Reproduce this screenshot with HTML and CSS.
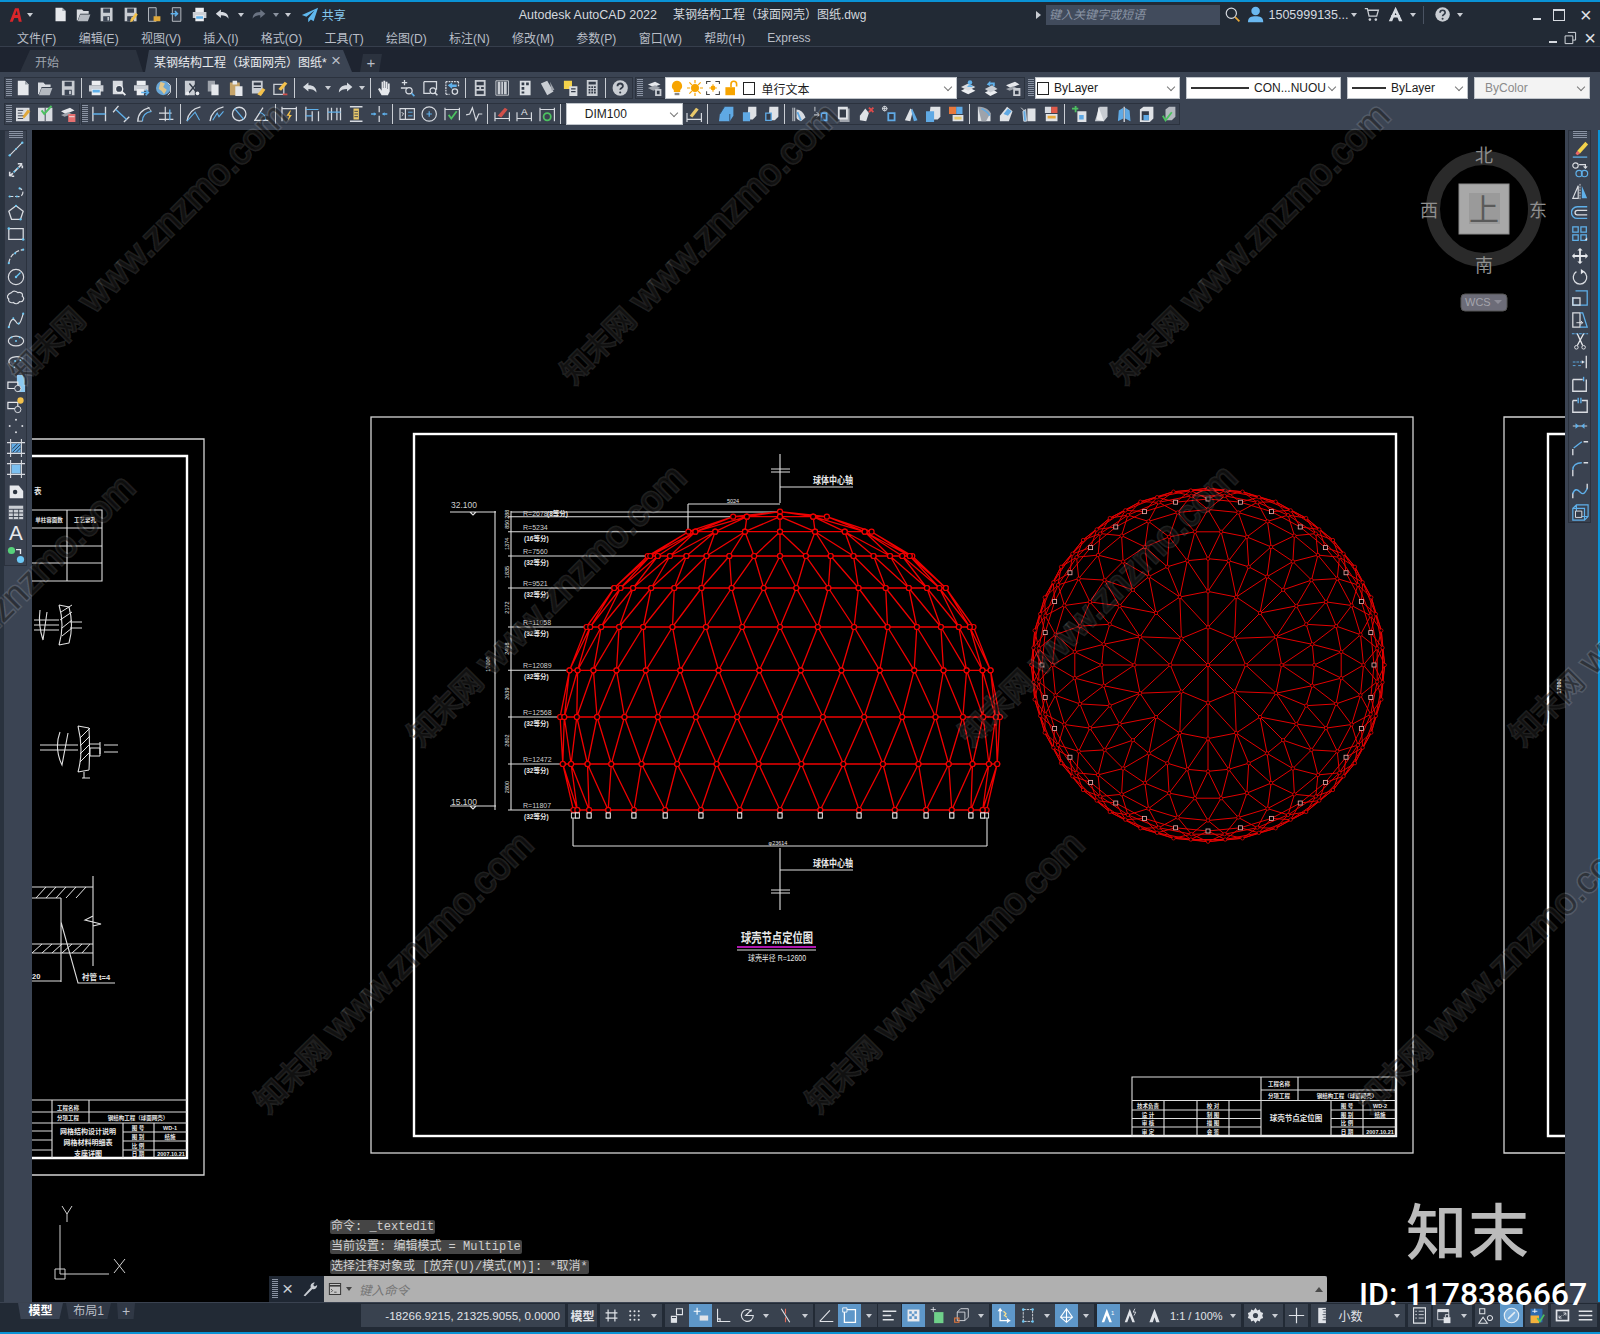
FILE: index.html
```html
<!DOCTYPE html>
<html lang="zh">
<head>
<meta charset="utf-8">
<title>Autodesk AutoCAD 2022</title>
<link rel="stylesheet" href="styles.css">
</head>
<body>
<svg class="defs" aria-hidden="true">
<defs>
<symbol id="new" viewBox="0 0 20 20"><path d="M4 2h8l4 4v12H4z" fill="#e6e8ec"/><path d="M12 2v4h4z" fill="#9aa0a8"/></symbol>
<symbol id="open" viewBox="0 0 20 20"><path d="M2 4h6l2 2h6v3H6l-3 8H2z" fill="#d9dce1"/><path d="M6 10h12l-3 8H3z" fill="#b4b9c0"/></symbol>
<symbol id="save" viewBox="0 0 20 20"><path d="M3 2h14v16H3z" fill="#c9cdd3"/><path d="M6 3h8v5H6zM6 12h8v6H6z" fill="#3b4453"/><path d="M11 13h2v4h-2z" fill="#c9cdd3"/></symbol>
<symbol id="saveas" viewBox="0 0 20 20"><use href="#save"/><path d="M10 16l6-8 2.500 2-6 8-3 1z" fill="#f3c14b"/></symbol>
<symbol id="phone1" viewBox="0 0 20 20"><path d="M4 2h9v16H4z" fill="#333b48" stroke="#c9cdd3"/><path d="M10 12h8v6h-8z" fill="#e0a83a"/></symbol>
<symbol id="phone2" viewBox="0 0 20 20"><path d="M5 2h10v16H5z" fill="#333b48" stroke="#c9cdd3"/><path d="M3 9h8M8 6l3 3-3 3" fill="none" stroke="#5fb0ea" stroke-width="1.800"/></symbol>
<symbol id="print" viewBox="0 0 20 20"><path d="M5 2h10v5H5z" fill="#eceef1"/><path d="M2 7h16v7H2z" fill="#ccd0d6"/><path d="M5 11h10v7H5z" fill="#eceef1"/><path d="M6 12h8v3H6z" fill="#5fb0ea"/></symbol>
<symbol id="preview" viewBox="0 0 20 20"><path d="M4 2h11v15H4z" fill="#d9dce1"/><circle cx="11" cy="11" r="4" fill="#3b4453" stroke="#eceef1" stroke-width="1.500"/><path d="M14 14l4 4" stroke="#eceef1" stroke-width="2"/></symbol>
<symbol id="plot" viewBox="0 0 20 20"><path d="M5 2h10v5H5z" fill="#eceef1"/><path d="M2 7h16v6H2z" fill="#ccd0d6"/><path d="M5 11h8v7H5z" fill="#eceef1"/><path d="M10 15h8M15 12l3 3-3 3" fill="none" stroke="#5fb0ea" stroke-width="1.800"/></symbol>
<symbol id="globe" viewBox="0 0 20 20"><circle cx="10" cy="10" r="8" fill="#6aa7d6"/><path d="M7 3l5 2-2 4 4 3-3 5-3-4-3-2z" fill="#e0c68a"/><path d="M15 4l3 3v8l-3 3" fill="none" stroke="#eceef1"/></symbol>
<symbol id="cut" viewBox="0 0 20 20"><path d="M3 2h11v16H3z" fill="#c9cdd3"/><path d="M8 5l9 11M16 5l-9 11" stroke="#333b48" stroke-width="1.600"/><circle cx="6" cy="16" r="2" fill="#eceef1"/><circle cx="17" cy="16" r="2" fill="#eceef1"/></symbol>
<symbol id="copy" viewBox="0 0 20 20"><path d="M4 2h8v12H4z" fill="#9ea3ab"/><path d="M8 6h8v12H8z" fill="#e6e8ec"/></symbol>
<symbol id="paste" viewBox="0 0 20 20"><path d="M3 4h11v14H3z" fill="#c6a46a"/><path d="M6 2h5v4H6z" fill="#e6e8ec"/><path d="M9 8h8v11H9z" fill="#e6e8ec"/></symbol>
<symbol id="match" viewBox="0 0 20 20"><path d="M3 2h12v14H3z" fill="#c9cdd3"/><path d="M5 4h8v3H5zM5 9h8v1H5z" fill="#333b48"/><path d="M9 17l6-7 3 2-5 7z" fill="#f3c14b"/></symbol>
<symbol id="paint" viewBox="0 0 20 20"><path d="M3 6h11v11H3z" fill="none" stroke="#c9cdd3" stroke-width="1.500"/><path d="M8 11l7-8 3 2-7 8z" fill="#f3c14b"/><path d="M13 17h5" stroke="#d0504a" stroke-width="2"/></symbol>
<symbol id="undo" viewBox="0 0 20 20"><path d="M8 4L2 9l6 5v-3c4 0 7 1 9 4 0-5-3-8-9-8z" fill="#d6dae0"/></symbol>
<symbol id="redo" viewBox="0 0 20 20"><path d="M12 4l6 5-6 5v-3c-4 0-7 1-9 4 0-5 3-8 9-8z" fill="#d6dae0"/></symbol>
<symbol id="redog" viewBox="0 0 20 20"><path d="M12 4l6 5-6 5v-3c-4 0-7 1-9 4 0-5 3-8 9-8z" fill="#6a7382"/></symbol>
<symbol id="hand" viewBox="0 0 20 20"><path d="M6 18l-4-7 2-1 2 3V3h1.500v7H8V2h2v8h.5V3h2v8h.5V5h2v9l-2 4z" fill="#e6e8ec"/></symbol>
<symbol id="zrt" viewBox="0 0 20 20"><path d="M7 1v6M4 4h6M3 10h7" stroke="#d6dae0" stroke-width="1.400"/><circle cx="12" cy="13" r="3.500" fill="none" stroke="#d6dae0" stroke-width="1.400"/><path d="M15 16l3 3" stroke="#5fb0ea" stroke-width="1.800"/></symbol>
<symbol id="zwin" viewBox="0 0 20 20"><path d="M3 3h14v9M3 3v13h7" fill="none" stroke="#d6dae0" stroke-width="1.400"/><circle cx="13" cy="13" r="3.200" fill="none" stroke="#d6dae0" stroke-width="1.400"/><path d="M15 15l3 3" stroke="#d6dae0" stroke-width="1.800"/></symbol>
<symbol id="zprev" viewBox="0 0 20 20"><path d="M3 3h14M3 17h4M3 3v14M17 3v6" fill="none" stroke="#d6dae0" stroke-dasharray="2 1" stroke-width="1.400"/><path d="M5 7l5-3v2h5v3h-5v2z" fill="#5fb0ea"/><circle cx="13" cy="14" r="3" fill="none" stroke="#d6dae0" stroke-width="1.400"/></symbol>
<symbol id="prop" viewBox="0 0 20 20"><path d="M4 1h12v18H4z" fill="#c9cdd3"/><path d="M6 3h8v4H6zM6 9h3v2H6zM11 9h3v2h-3zM6 13h8v4H6z" fill="#333b48"/></symbol>
<symbol id="dc" viewBox="0 0 20 20"><path d="M3 2h14v16H3z" fill="none" stroke="#c9cdd3"/><path d="M5 3h3v14H5zM9 3h2v14H9zM12 3h3v14h-3z" fill="#c9cdd3"/></symbol>
<symbol id="tp" viewBox="0 0 20 20"><path d="M4 2h12v16H4z" fill="#d9dce1"/><path d="M6 4h3v3H6zM11 4h3v3h-3zM6 9h3v3H6zM6 14h3v2H6z" fill="#333b48"/></symbol>
<symbol id="sheet" viewBox="0 0 20 20"><path d="M3 5l7-3 7 12-7 4z" fill="#c9cdd3"/><path d="M13 3l5 9-3 1z" fill="#9ea3ab"/></symbol>
<symbol id="note" viewBox="0 0 20 20"><path d="M3 2h9v9H3z" fill="#f3d24b"/><path d="M9 8h9v11H9z" fill="#d9dce1"/><path d="M11 11h5M11 14h5" stroke="#333b48" stroke-width="1.400"/></symbol>
<symbol id="calc" viewBox="0 0 20 20"><path d="M4 1h12v18H4z" fill="#c9cdd3"/><path d="M6 3h8v3H6z" fill="#333b48"/><path d="M6 8h2v2H6zM9 8h2v2H9zM12 8h2v2h-2zM6 11h2v2H6zM9 11h2v2H9zM12 11h2v2h-2zM6 14h2v2H6zM9 14h2v2H9zM12 14h2v2h-2z" fill="#333b48"/></symbol>
<symbol id="help" viewBox="0 0 20 20"><circle cx="10" cy="10" r="8.500" fill="#c9cdd3"/><path d="M7 8c0-4 6-4 6 0 0 2-3 2-3 4" fill="none" stroke="#333b48" stroke-width="2"/><circle cx="10" cy="15" r="1.200" fill="#333b48"/></symbol>
<symbol id="layer" viewBox="0 0 20 20"><path d="M3 6l8-3 6 3-8 3z" fill="#e6e8ec"/><path d="M3 10l8-3 6 3-8 3z" fill="#9ea3ab"/><path d="M11 11h7v8h-7z" fill="#c9cdd3"/><path d="M13 13h3v4h-3z" fill="#333b48"/></symbol>
<symbol id="lamatch" viewBox="0 0 20 20"><path d="M2 13l8-4 8 4-8 4z" fill="#eceef1"/><path d="M2 9l8-4 8 4-8 4z" fill="#d9dce1"/><circle cx="12" cy="4" r="2.500" fill="#5fb0ea"/><path d="M9 9c0-3 6-3 6 0z" fill="#5fb0ea"/></symbol>
<symbol id="laprev" viewBox="0 0 20 20"><path d="M3 15l8-4 6 4-8 4z" fill="#eceef1"/><path d="M3 11l8-4 6 4-8 4z" fill="#c9cdd3"/><path d="M5 6l4-4v2h5v4h-2V6H9v2z" fill="#5fb0ea"/></symbol>
<symbol id="mark" viewBox="0 0 20 20"><path d="M2 3h15v15H2z" fill="#d9dce1"/><path d="M4 6h6M4 9h5M4 12h7M4 15h6" stroke="#333b48"/><path d="M9 13l6-8 3 2-7 8z" fill="#e0a83a"/></symbol>
<symbol id="check" viewBox="0 0 20 20"><path d="M2 3h16v15H2z" fill="#d9dce1"/><path d="M10 3v15" stroke="#333b48"/><path d="M6 6l3 4 8-9" fill="none" stroke="#4cc160" stroke-width="2.200"/></symbol>
<symbol id="stack" viewBox="0 0 20 20"><path d="M2 7l10-4 5 3-10 4z" fill="#e6e8ec"/><path d="M2 11l8-3 4 2-8 3z" fill="#9ea3ab"/><path d="M10 10h8v9h-8z" fill="#e57070"/><path d="M11 13h6" stroke="#eee"/></symbol>
<symbol id="stackg" viewBox="0 0 20 20"><path d="M2 7l10-4 5 3-10 4z" fill="#e6e8ec"/><path d="M2 11l8-3 4 2-8 3z" fill="#9ea3ab"/><path d="M10 10h8v9h-8z" fill="#c9cdd3"/><path d="M12 13h4v4h-4z" fill="#333b48"/></symbol>
<symbol id="dimlin" viewBox="0 0 20 20"><path d="M3 2v16M17 2v16" stroke="#d6dae0" stroke-width="1.500"/><path d="M3 10h14" stroke="#5fb0ea" stroke-width="1.500"/></symbol>
<symbol id="dimal" viewBox="0 0 20 20"><path d="M7 1L1 8M19 13l-6 6" stroke="#d6dae0" stroke-width="1.500"/><path d="M4 5l12 11" stroke="#5fb0ea" stroke-width="1.500"/></symbol>
<symbol id="dimarc" viewBox="0 0 20 20"><path d="M3 18C3 10 8 5 16 3" fill="none" stroke="#d6dae0" stroke-width="1.500"/><path d="M8 18C8 12 12 8 18 7" fill="none" stroke="#5fb0ea" stroke-width="1.500"/><path d="M2 18h6M14 2l4 5" stroke="#d6dae0"/></symbol>
<symbol id="dimord" viewBox="0 0 20 20"><path d="M9 2v16M2 16h16M2 9h14" stroke="#d6dae0" fill="none" stroke-width="1.300"/><path d="M14 5v12M3 16" stroke="#5fb0ea" stroke-width="1.500"/></symbol>
<symbol id="dimrad" viewBox="0 0 20 20"><path d="M2 18C3 10 8 4 17 2" fill="none" stroke="#d6dae0" stroke-width="1.400"/><path d="M2 18L11 8l5 9" fill="none" stroke="#5fb0ea" stroke-width="1.200"/></symbol>
<symbol id="dimjog" viewBox="0 0 20 20"><path d="M2 18C3 10 8 4 17 2" fill="none" stroke="#d6dae0" stroke-width="1.400"/><path d="M5 17l5-8 2 4 5-6" fill="none" stroke="#5fb0ea" stroke-width="1.200"/></symbol>
<symbol id="dimdia" viewBox="0 0 20 20"><circle cx="10" cy="10" r="7.500" fill="none" stroke="#d6dae0" stroke-width="1.400"/><path d="M5 4l10 12" stroke="#5fb0ea" stroke-width="1.400"/></symbol>
<symbol id="dimang" viewBox="0 0 20 20"><path d="M2 17h16M3 17L12 3" stroke="#d6dae0" stroke-width="1.400"/><path d="M8 8c4 1 7 4 7 9" fill="none" stroke="#5fb0ea" stroke-width="1.300"/></symbol>
<symbol id="dimq" viewBox="0 0 20 20"><path d="M2 2v16M18 2v16M2 4h16" stroke="#d6dae0" stroke-width="1.400" fill="none"/><path d="M11 6L7 12h3l-2 6 5-7h-3l2-5z" fill="#f3c14b"/></symbol>
<symbol id="dimb" viewBox="0 0 20 20"><path d="M3 2v16M10 7v11M17 7v11" stroke="#d6dae0" stroke-width="1.400"/><path d="M3 5h14M3 12h7" stroke="#5fb0ea" stroke-width="1.300"/></symbol>
<symbol id="dimc" viewBox="0 0 20 20"><path d="M3 3v14M7 3v14M13 3v14M17 3v14" stroke="#d6dae0" stroke-width="1.400"/><path d="M3 8h14" stroke="#5fb0ea" stroke-width="1.300"/></symbol>
<symbol id="dims" viewBox="0 0 20 20"><path d="M3 2h14M3 18h14" stroke="#d6dae0" stroke-width="1.600"/><path d="M7 4h6v12H7z" fill="#e8c86a"/><path d="M8 7h4M8 10h4M8 13h4" stroke="#333b48"/></symbol>
<symbol id="dimbk" viewBox="0 0 20 20"><path d="M10 1v7M10 12v7" stroke="#d6dae0" stroke-width="1.400"/><path d="M1 10h5M14 10h5" stroke="#5fb0ea" stroke-width="1.500"/><path d="M7 10l-3-2v4zM13 10l3-2v4z" fill="#5fb0ea"/></symbol>
<symbol id="tol" viewBox="0 0 20 20"><path d="M2 4h16v12H2zM8 4v12" fill="none" stroke="#d6dae0" stroke-width="1.300"/><path d="M4 8l2 2-2 2" stroke="#fff" fill="none"/><path d="M11 8h5M11 12h5" stroke="#5fb0ea"/></symbol>
<symbol id="cen" viewBox="0 0 20 20"><circle cx="10" cy="10" r="8" fill="none" stroke="#d6dae0" stroke-width="1.300"/><path d="M10 7v6M7 10h6" stroke="#5fb0ea" stroke-width="1.300"/></symbol>
<symbol id="insp" viewBox="0 0 20 20"><path d="M2 3v14M18 3v14M2 5h16" stroke="#d6dae0" stroke-width="1.300"/><path d="M6 11l3 4 6-8" fill="none" stroke="#4cc160" stroke-width="2"/></symbol>
<symbol id="dimjl" viewBox="0 0 20 20"><path d="M1 11l4-1 3-7 4 14 3-7h4" fill="none" stroke="#d6dae0" stroke-width="1.300"/></symbol>
<symbol id="dimed" viewBox="0 0 20 20"><path d="M2 8v10M18 8v10M2 15h16" stroke="#d6dae0" stroke-width="1.300"/><path d="M5 12l8-9 3 2-7 9z" fill="#d0504a"/></symbol>
<symbol id="dimte" viewBox="0 0 20 20"><path d="M2 8v10M18 8v10M2 15h16" stroke="#d6dae0" stroke-width="1.300"/><text class="ic-a" x="10" y="11" text-anchor="middle">A</text></symbol>
<symbol id="dimup" viewBox="0 0 20 20"><path d="M2 3v15M18 3v15M2 5h16" stroke="#d6dae0" stroke-width="1.300"/><path d="M6 13a4 4 0 0 1 8 0M14 13a4 4 0 0 1-8 0" fill="none" stroke="#4cc160" stroke-width="2"/></symbol>
<symbol id="dimst" viewBox="0 0 20 20"><path d="M2 9v10M18 9v10M2 16h16" stroke="#d6dae0" stroke-width="1.300"/><path d="M5 12l7-9 3 2-7 9z" fill="#e8c86a"/></symbol>
<symbol id="b3a" viewBox="0 0 20 20"><path d="M8 2h10v10l-4 6H2l1-8z" fill="#5fa9e4"/><path d="M3 10l5-8M14 18l0-8" stroke="#2f4a63"/></symbol>
<symbol id="b3b" viewBox="0 0 20 20"><path d="M9 2h9v10l-4 4H8z" fill="#dfe2e6"/><path d="M3 8h8v10H3z" fill="#5fa9e4"/></symbol>
<symbol id="b3c" viewBox="0 0 20 20"><path d="M8 2h10v11l-4 4H7z" fill="#dfe2e6"/><path d="M4 9h6v8H4z" fill="#333b48" stroke="#5fa9e4" stroke-width="1.500"/></symbol>
<symbol id="b3d" viewBox="0 0 20 20"><path d="M3 3v15M5 3v15" stroke="#d6dae0"/><path d="M7 5c4 0 8 3 10 9l-5 4c-2-1-5-2-5-4z" fill="#d6dae0"/><path d="M8 8l4 9" stroke="#5fa9e4" stroke-width="2"/></symbol>
<symbol id="b3e" viewBox="0 0 20 20"><path d="M2 11h5M5 8l3 3-3 3M3 2v5" stroke="#d6dae0" fill="none"/><path d="M9 8h8v10H9z" fill="#5fa9e4"/><path d="M11 10h4v6h-4z" fill="#333b48"/></symbol>
<symbol id="b3f" viewBox="0 0 20 20"><path d="M5 4h11v15H5z" fill="#9ea3ab"/><path d="M3 2h11v14H3z" fill="#dfe2e6"/><path d="M5 5h7v9H5z" fill="#333b48"/></symbol>
<symbol id="b3g" viewBox="0 0 20 20"><path d="M3 12l6-8 4 5-3 9-7-1z" fill="#dfe2e6"/><path d="M13 3l5 5M18 3l-5 5" stroke="#e04a4a" stroke-width="2"/></symbol>
<symbol id="b3h" viewBox="0 0 20 20"><path d="M5 1v6M2 4h6" stroke="#d6dae0"/><circle cx="5" cy="4" r="2.500" fill="none" stroke="#d6dae0"/><path d="M8 8h9v10H8z" fill="#5fa9e4"/><path d="M10 10h5v6h-5z" fill="#333b48"/></symbol>
<symbol id="b3i" viewBox="0 0 20 20"><path d="M3 17l6-13 3 2-3 12z" fill="#dfe2e6"/><path d="M11 4l6 13-4 1-3-12z" fill="#5fa9e4"/></symbol>
<symbol id="b3j" viewBox="0 0 20 20"><path d="M7 2h11v11l-3 3H5z" fill="#dfe2e6"/><path d="M2 7h9v12H2z" fill="#5fa9e4"/></symbol>
<symbol id="b3k" viewBox="0 0 20 20"><path d="M2 2h8v8H2z" fill="#e8783c"/><path d="M10 2h7v8h-7z" fill="#5fa9e4"/><path d="M6 11h12v7H6z" fill="#dfe2e6"/><path d="M8 13h8v3H8z" fill="#e8c86a"/></symbol>
<symbol id="b3l" viewBox="0 0 20 20"><path d="M3 2v16h14V9z" fill="#dfe2e6"/><path d="M3 2c6 0 12 2 14 7l-5 9H7z" fill="#9ea3ab"/><path d="M7 4c4 2 8 4 9 8" fill="none" stroke="#5fa9e4" stroke-width="1.800"/></symbol>
<symbol id="b3m" viewBox="0 0 20 20"><path d="M3 12l8-10 6 5-4 11H3z" fill="#dfe2e6"/><path d="M7 10l5-6 4 3-4 5z" fill="#5fa9e4"/></symbol>
<symbol id="b3n" viewBox="0 0 20 20"><path d="M3 7l3-2 1 13H4zM1 3l4 4" stroke="#d6dae0" fill="#5fa9e4"/><path d="M8 4h9v14H8z" fill="#dfe2e6"/></symbol>
<symbol id="b3o" viewBox="0 0 20 20"><path d="M3 2h7v7H3z" fill="#d6dae0"/><path d="M10 2h7v7h-7z" fill="#e05a4a"/><path d="M4 10h13v8H4z" fill="#dfe2e6"/><path d="M6 12h9v3H6z" fill="#e8a83a"/></symbol>
<symbol id="b3p" viewBox="0 0 20 20"><path d="M6 1v7M2 4h7" stroke="#4cc160" stroke-width="2"/><path d="M8 7h10v12H8z" fill="#dfe2e6"/><path d="M10 11h5v5h-5z" fill="#5fa9e4"/></symbol>
<symbol id="b3q" viewBox="0 0 20 20"><path d="M8 2h9v11l-4 5H3z" fill="#c9cdd3"/><path d="M7 2l-2 14 8 2" fill="#eceef1"/></symbol>
<symbol id="b3r" viewBox="0 0 20 20"><path d="M3 18l1-12 5-3v12zM17 18l-1-12-5-3v12z" fill="#5fa9e4"/><path d="M10 2v17" stroke="#dfe2e6" stroke-width="1.400"/></symbol>
<symbol id="b3s" viewBox="0 0 20 20"><path d="M3 5l4-3h11v13l-4 4H3z" fill="#dfe2e6"/><path d="M5 7h8v10H5z" fill="#333b48"/><path d="M7 11h6v6H7z" fill="#5fa9e4"/></symbol>
<symbol id="b3t" viewBox="0 0 20 20"><path d="M7 5l4-3h7v11l-4 4H7z" fill="#b4b9c0"/><path d="M4 12l3 5 7-9" fill="none" stroke="#4cc160" stroke-width="2"/></symbol>
<symbol id="bulb" viewBox="0 0 20 20"><path d="M10 1a6.500 6.500 0 0 0-4 11.500V15h8v-2.500A6.500 6.500 0 0 0 10 1z" fill="#f7a400"/><path d="M7 16h6v3H7z" fill="#888"/></symbol>
<symbol id="sun" viewBox="0 0 20 20"><circle cx="10" cy="10" r="5" fill="#f7a400"/><path d="M10 0v4M10 16v4M0 10h4M16 10h4M3 3l3 3M14 14l3 3M17 3l-3 3M6 14l-3 3" stroke="#f7a400" stroke-width="1.500"/></symbol>
<symbol id="vpfr" viewBox="0 0 20 20"><path d="M2 5V2h5M13 2h5v3M2 14v4h4M13 18h5v-4" fill="none" stroke="#444" stroke-width="1.300"/><circle cx="10" cy="10" r="3" fill="#f7a400"/><path d="M10 5v10M5 10h10" stroke="#f7a400"/></symbol>
<symbol id="lock" viewBox="0 0 20 20"><path d="M3 9h12v10H3z" fill="#f7a400"/><path d="M10 9V5a3.500 3.500 0 0 1 7 0v3" fill="none" stroke="#f7a400" stroke-width="2"/></symbol>
<symbol id="plane" viewBox="0 0 20 20"><path d="M19 2L1 10l5 2 9-7-7 9v4l3-3 3 2z" fill="#5fb8ee"/></symbol>
<symbol id="acad" viewBox="0 0 20 20"><path d="M8 1h5l4 18h-4l-1-5H7l-2 5H1zM8 10h3.500L10.500 4z" fill="#d9262a"/></symbol>
<symbol id="mag" viewBox="0 0 20 20"><circle cx="8.500" cy="8.500" r="6" fill="none" stroke="#d6dae0" stroke-width="1.400"/><path d="M13 13l5 5" stroke="#e8a83a" stroke-width="2"/></symbol>
<symbol id="user" viewBox="0 0 20 20"><circle cx="10" cy="6" r="5" fill="#6ab8f0"/><path d="M1 19c0-6 4-7 9-7s9 1 9 7z" fill="#6ab8f0"/></symbol>
<symbol id="cart" viewBox="0 0 20 20"><path d="M2 3h3l2 9h9l2-7H6" fill="none" stroke="#c9cdd3" stroke-width="1.500"/><circle cx="8" cy="16" r="1.500" fill="#c9cdd3"/><circle cx="15" cy="16" r="1.500" fill="#c9cdd3"/></symbol>
<symbol id="adsk" viewBox="0 0 20 20"><path d="M10 1l8 17h-4l-4-10-4 10H2z" fill="#d6dae0"/><path d="M5 12h10" stroke="#d6dae0" stroke-width="3"/></symbol>
<symbol id="prompt" viewBox="0 0 20 20"><path d="M3 3h14v14H3z" fill="#c4c4c4" stroke="#3a3a3a" stroke-width="1.300"/><path d="M3 6h14" stroke="#3a3a3a" stroke-width="2"/><path d="M5 10l2 2-2 2M9 14h3" stroke="#3a3a3a" fill="none"/></symbol>
<symbol id="wrench" viewBox="0 0 20 20"><path d="M2 18l9-10c-1-3 1-6 5-6l-2 3 2 2 3-2c0 4-3 6-6 5l-9 9z" fill="#c9cdd3"/></symbol>
<symbol id="l1" viewBox="0 0 20 20"><path d="M3 17L17 3" stroke="#d9dce1" stroke-width="1.200"/><g fill="#6cc8f5"><circle cx="3" cy="17" r="1.300"/><circle cx="10" cy="10" r="1"/><circle cx="17" cy="3" r="1.300"/></g></symbol>
<symbol id="l2" viewBox="0 0 20 20"><path d="M3 17L17 3M12 3h5v5M3 12v5h5" fill="none" stroke="#d9dce1" stroke-width="1.800" stroke-dasharray="5 2"/><g fill="#6cc8f5"><circle cx="8" cy="12" r="1.100"/><circle cx="12" cy="8" r="1.100"/></g></symbol>
<symbol id="l3" viewBox="0 0 20 20"><path d="M2 15h10a4 4 0 0 0 2-9" fill="none" stroke="#d9dce1" stroke-width="1.300" stroke-dasharray="5 2"/><g fill="#6cc8f5"><circle cx="3" cy="15" r="1.200"/><circle cx="11" cy="15" r="1.200"/><circle cx="14" cy="6" r="1.200"/></g></symbol>
<symbol id="l4" viewBox="0 0 20 20"><path d="M10 2l8 6-3 9H5L2 8z" fill="none" stroke="#d9dce1" stroke-width="1.400"/><g fill="#6cc8f5"><circle cx="15" cy="17" r="1.300"/><circle cx="10" cy="2" r="1.200"/></g></symbol>
<symbol id="l5" viewBox="0 0 20 20"><path d="M2 4h16v12H2z" fill="none" stroke="#d9dce1" stroke-width="1.400"/><g fill="#6cc8f5"><circle cx="2" cy="4" r="1.400"/><circle cx="18" cy="16" r="1.400"/></g></symbol>
<symbol id="l6" viewBox="0 0 20 20"><path d="M2 18C3 10 9 4 18 3" fill="none" stroke="#d9dce1" stroke-width="1.300" stroke-dasharray="5 2"/><g fill="#6cc8f5"><circle cx="2" cy="18" r="1.200"/><circle cx="9" cy="7" r="1.200"/><circle cx="18" cy="3" r="1.200"/></g></symbol>
<symbol id="l7" viewBox="0 0 20 20"><circle cx="10" cy="10" r="8.500" fill="none" stroke="#d9dce1" stroke-width="1.300"/><path d="M10 10l5-5" stroke="#6cc8f5" stroke-width="1.400"/><circle cx="10" cy="10" r="1.300" fill="#6cc8f5"/></symbol>
<symbol id="l8" viewBox="0 0 20 20"><path d="M5 4c2-3 6-1 7 0 3-1 6 1 5 4 3 2 1 7-3 6-2 3-5 3-7 1-3 1-6-1-5-4-3-2-1-6 3-7z" fill="none" stroke="#d9dce1" stroke-width="1.300"/></symbol>
<symbol id="l9" viewBox="0 0 20 20"><path d="M2 18c2-9 5-11 8-6s5 2 8-9" fill="none" stroke="#d9dce1" stroke-width="1.300"/><g fill="#6cc8f5"><circle cx="2" cy="18" r="1.200"/><circle cx="7" cy="8" r="1.100"/><circle cx="13" cy="14" r="1.100"/><circle cx="18" cy="3" r="1.200"/></g></symbol>
<symbol id="l10" viewBox="0 0 20 20"><ellipse cx="10" cy="10" rx="8.500" ry="5.500" fill="none" stroke="#d9dce1" stroke-width="1.300"/><g fill="#6cc8f5"><circle cx="10" cy="10" r="1.100"/><circle cx="5" cy="6" r="1"/><circle cx="14" cy="6" r="1"/></g></symbol>
<symbol id="l11" viewBox="0 0 20 20"><path d="M18 7C14 2 3 4 2 9c0 4 3 6 7 7" fill="none" stroke="#d9dce1" stroke-width="1.300"/><g fill="#6cc8f5"><circle cx="9" cy="9" r="1.100"/><circle cx="15" cy="8" r="1"/><circle cx="7" cy="15" r="1"/></g></symbol>
<symbol id="l12" viewBox="0 0 20 20"><path d="M11 0h6l3 3v16h-9z" fill="#8cc8f0"/><path d="M1 8h11v7H1z" fill="#3b4453" stroke="#e6e8ec" stroke-width="1.300"/><circle cx="12" cy="15" r="3.500" fill="#3b4453" stroke="#e6e8ec"/></symbol>
<symbol id="l13" viewBox="0 0 20 20"><path d="M1 7h11v7H1z" fill="#3b4453" stroke="#e6e8ec" stroke-width="1.300"/><circle cx="12" cy="15" r="3.500" fill="#3b4453" stroke="#e6e8ec"/><circle cx="15" cy="5" r="3.500" fill="#f3c14b"/></symbol>
<symbol id="l14" viewBox="0 0 20 20"><g fill="#d9dce1"><circle cx="10" cy="3" r="1.100"/><circle cx="3" cy="10" r="1.100"/><circle cx="17" cy="10" r="1.100"/><circle cx="10" cy="17" r="1.100"/></g></symbol>
<symbol id="l15" viewBox="0 0 20 20"><path d="M5 5h10v10H5z" fill="#5fa9e4"/><path d="M6 11l6-6M6 15l9-9M10 15l5-5" stroke="#1c2a3a"/><path d="M0 4h20M0 16h20M4 0v20M16 0v20" stroke="#d9dce1" stroke-width="1.200"/></symbol>
<symbol id="l16" viewBox="0 0 20 20"><path d="M5 5h10v10H5z" fill="#7cc0f0"/><path d="M0 4h20M0 16h20M4 0v20M16 0v20" stroke="#d9dce1" stroke-width="1.200"/></symbol>
<symbol id="l17" viewBox="0 0 20 20"><path d="M3 4h10l5 6v8H3z" fill="#e6e8ec"/><circle cx="9" cy="11" r="2.500" fill="#2c3440"/></symbol>
<symbol id="l18" viewBox="0 0 20 20"><path d="M2 3h16v15H2z" fill="#c9cdd3"/><path d="M2 7h16M2 11h16M2 15h16M7 7v11M13 7v11" stroke="#333b48"/></symbol>
<symbol id="l19" viewBox="0 0 20 20"><text class="ic-big" x="10" y="18" text-anchor="middle">A</text></symbol>
<symbol id="l20" viewBox="0 0 20 20"><circle cx="5" cy="5" r="4" fill="#57d27a"/><circle cx="15" cy="15" r="4" fill="#6cc8f5"/><path d="M10 4h5v5" fill="none" stroke="#e6e8ec" stroke-width="1.500"/></symbol>
<symbol id="r1" viewBox="0 0 20 20"><path d="M7 12L16 2l3 3-9 10z" fill="#f3d24b"/><path d="M7 12l3 3-3 2-2-2z" fill="#e66"/><path d="M2 19h16" stroke="#5fb0ea" stroke-width="1.400"/></symbol>
<symbol id="r2" viewBox="0 0 20 20"><circle cx="5" cy="5" r="3" fill="none" stroke="#d9dce1" stroke-width="1.300"/><path d="M9 4h7v4M14 6l2 2 2-2" fill="none" stroke="#d9dce1" stroke-width="1.300"/><circle cx="9" cy="14" r="3.500" fill="none" stroke="#5fb0ea" stroke-width="1.300"/><circle cx="15" cy="14" r="3.500" fill="none" stroke="#5fb0ea" stroke-width="1.300"/></symbol>
<symbol id="r3" viewBox="0 0 20 20"><path d="M8 3L2 17h6z" fill="none" stroke="#d9dce1" stroke-width="1.300"/><path d="M10 1v18" stroke="#d9dce1" stroke-dasharray="2 1"/><path d="M12 3l6 14h-6z" fill="#5fb0ea"/></symbol>
<symbol id="r4" viewBox="0 0 20 20"><path d="M18 3H7a6 6 0 0 0 0 13h11" fill="none" stroke="#5fb0ea" stroke-width="1.500"/><path d="M18 7H7a2.500 2.500 0 0 0 0 5h11" fill="none" stroke="#d9dce1" stroke-width="1.500"/></symbol>
<symbol id="r5" viewBox="0 0 20 20"><path d="M2 2h6v6H2zM11 2h6v6h-6zM2 11h6v6H2zM11 11h6v6h-6z" fill="none" stroke="#5fb0ea" stroke-width="1.400"/><path d="M15 17l3-3v3z" fill="#e6e8ec"/></symbol>
<symbol id="r6" viewBox="0 0 20 20"><path d="M10 1l3 3h-2v5h5V7l3 3-3 3v-2h-5v5h2l-3 3-3-3h2v-5H4v2l-3-3 3-3v2h5V4H7z" fill="#e6e8ec"/></symbol>
<symbol id="r7" viewBox="0 0 20 20"><path d="M14 4a7.500 7.500 0 1 1-8 0" fill="none" stroke="#d9dce1" stroke-width="1.400"/><path d="M11 1l4 3-4 3z" fill="#e6e8ec"/></symbol>
<symbol id="r8" viewBox="0 0 20 20"><path d="M5 2h13v16H2V9" fill="none" stroke="#5fb0ea" stroke-width="1.400"/><path d="M2 10h8v8H2z" fill="none" stroke="#d9dce1" stroke-width="1.400"/></symbol>
<symbol id="r9" viewBox="0 0 20 20"><path d="M2 2h8v16H2z" fill="none" stroke="#d9dce1" stroke-width="1.400"/><path d="M10 2h3l5 16H10" fill="none" stroke="#5fb0ea" stroke-width="1.400"/><path d="M6 13h7M11 11l2 2-2 2" fill="none" stroke="#e6e8ec"/></symbol>
<symbol id="r10" viewBox="0 0 20 20"><path d="M1 2h18" stroke="#5fb0ea" stroke-dasharray="3 1" stroke-width="1.200"/><path d="M7 2l6 13M14 2L7 15" stroke="#e6e8ec" stroke-width="1.500"/><circle cx="6" cy="17" r="2" fill="none" stroke="#e6e8ec"/><circle cx="14" cy="17" r="2" fill="none" stroke="#e6e8ec"/></symbol>
<symbol id="r11" viewBox="0 0 20 20"><path d="M17 3v14" stroke="#d9dce1" stroke-width="1.500"/><path d="M2 10h13M2 14h4M8 14h4" stroke="#5fb0ea" stroke-dasharray="3 1"/><path d="M15 10l-3-2v4z" fill="#e6e8ec"/></symbol>
<symbol id="r12" viewBox="0 0 20 20"><path d="M2 5h11M17 5v13H2V5" fill="none" stroke="#d9dce1" stroke-width="1.500"/><path d="M14 2v5" stroke="#5fb0ea" stroke-width="1.500"/></symbol>
<symbol id="r13" viewBox="0 0 20 20"><path d="M2 5h5M12 5h6v13H2V5" fill="none" stroke="#d9dce1" stroke-width="1.500"/><path d="M8 2v6M11 2v6" stroke="#5fb0ea" stroke-width="1.500"/></symbol>
<symbol id="r14" viewBox="0 0 20 20"><path d="M2 10h16" stroke="#d9dce1" stroke-dasharray="4 2"/><path d="M9 10L5 7v6zM11 10l4-3v6z" fill="#5fb0ea"/></symbol>
<symbol id="r15" viewBox="0 0 20 20"><path d="M2 18v-7M14 3h5" stroke="#d9dce1" stroke-width="1.500"/><path d="M3 10l9-7" stroke="#5fb0ea" stroke-width="1.500"/></symbol>
<symbol id="r16" viewBox="0 0 20 20"><path d="M2 18v-7M14 3h5" stroke="#d9dce1" stroke-width="1.500"/><path d="M2 11c0-5 4-8 10-8" fill="none" stroke="#5fb0ea" stroke-width="1.500"/></symbol>
<symbol id="r17" viewBox="0 0 20 20"><path d="M2 18v-6M18 2v6" stroke="#d9dce1" stroke-width="1.500"/><path d="M2 13c2-6 5-5 8-2s5 3 8-4" fill="none" stroke="#5fb0ea" stroke-width="1.500"/></symbol>
<symbol id="r18" viewBox="0 0 20 20"><path d="M2 6h13v13H2zM2 6l4-4h13v13l-4 4M6 2v13h13" fill="none" stroke="#5fb0ea" stroke-width="1.300"/><path d="M5 9h7v7H5z" fill="#333b48" stroke="#e6e8ec"/></symbol>
<symbol id="s-grid" viewBox="0 0 20 20"><path d="M6 3v14M14 3v14M3 7h14M3 13h14" stroke="#e0e3e8" stroke-width="1.400"/></symbol>
<symbol id="s-snap" viewBox="0 0 20 20"><g fill="#e0e3e8"><circle cx="5" cy="5" r="1.200"/><circle cx="10" cy="5" r="1.200"/><circle cx="15" cy="5" r="1.200"/><circle cx="5" cy="10" r="1.200"/><circle cx="10" cy="10" r="1.200"/><circle cx="15" cy="10" r="1.200"/><circle cx="5" cy="15" r="1.200"/><circle cx="10" cy="15" r="1.200"/><circle cx="15" cy="15" r="1.200"/></g></symbol>
<symbol id="s-infer" viewBox="0 0 20 20"><path d="M10 2h7v7h-7zM4 11h6v7H4z" fill="none" stroke="#e0e3e8" stroke-width="1.300"/><path d="M4 13h6v5H4z" fill="#e0e3e8"/></symbol>
<symbol id="s-dyn" viewBox="0 0 20 20"><path d="M6 1v8M2 5h8" stroke="#fff" stroke-width="1.300"/><path d="M9 10h10v6H9z" fill="#e0e3e8"/></symbol>
<symbol id="s-ortho" viewBox="0 0 20 20"><path d="M3 2v15h15M3 14h3v3" fill="none" stroke="#e0e3e8" stroke-width="1.300"/></symbol>
<symbol id="s-polar" viewBox="0 0 20 20"><path d="M16 5a7 7 0 1 0 2 5H9l7-7" fill="none" stroke="#e0e3e8" stroke-width="1.300"/></symbol>
<symbol id="s-iso" viewBox="0 0 20 20"><path d="M5 2l10 16" stroke="#e0e3e8" stroke-width="1.300"/><path d="M10 2v6M10 12v6" stroke="#e06a5a" stroke-width="1.300"/></symbol>
<symbol id="s-ang" viewBox="0 0 20 20"><path d="M2 17h16M2 17L14 4" fill="none" stroke="#e0e3e8" stroke-width="1.300"/></symbol>
<symbol id="s-osnap" viewBox="0 0 20 20"><path d="M4 3h13v15H4z" fill="none" stroke="#fff" stroke-width="1.500"/><path d="M2 1h5v5H2z" fill="#5e97c9" stroke="#fff"/></symbol>
<symbol id="s-lw" viewBox="0 0 20 20"><path d="M2 4h16v2H2zM2 9h10v2H2zM2 14h13v2H2z" fill="#e0e3e8"/></symbol>
<symbol id="s-trans" viewBox="0 0 20 20"><path d="M3 3h14v14H3z" fill="#e8eaee"/><path d="M5 5h3v3H5zM11 5h3v3h-3zM8 8h3v3H8zM5 11h3v3H5zM11 11h3v3h-3z" fill="#5e97c9"/></symbol>
<symbol id="s-sel" viewBox="0 0 20 20"><path d="M2 3h6M5 0v6" stroke="#e0e3e8"/><path d="M6 6h11v13H6z" fill="#6fd08a"/></symbol>
<symbol id="s-cube" viewBox="0 0 20 20"><path d="M5 6h9v10H5zM5 6l4-4h9v10l-4 4" fill="none" stroke="#e0e3e8"/><path d="M2 13h5v5H2z" fill="none" stroke="#e8783c" stroke-width="1.300"/></symbol>
<symbol id="s-ucs" viewBox="0 0 20 20"><path d="M6 3v13h12" fill="none" stroke="#fff" stroke-width="1.600"/><path d="M6 1l3 4H3zM18 16l-4-3v6z" fill="#fff"/><path d="M10 5l3 3-2 2 3 2" fill="none" stroke="#ffe28a" stroke-width="1.300"/></symbol>
<symbol id="s-gizmo" viewBox="0 0 20 20"><path d="M5 3h11v14H5z" fill="none" stroke="#e0e3e8" stroke-dasharray="3 1"/><g fill="#6cc8f5"><circle cx="5" cy="3" r="1.500"/><circle cx="16" cy="3" r="1.500"/><circle cx="5" cy="17" r="1.500"/><circle cx="16" cy="17" r="1.500"/></g></symbol>
<symbol id="s-dcube" viewBox="0 0 20 20"><path d="M10 2l7 10-7 6-7-6zM10 2v16M3 12h14" fill="none" stroke="#fff" stroke-width="1.300"/></symbol>
<symbol id="s-anno" viewBox="0 0 20 20"><path d="M8 2l6 16h-3l-3-8-3 8H2z" fill="#fff"/><text class="ic-t" x="13" y="9">1</text></symbol>
<symbol id="s-anno2" viewBox="0 0 20 20"><path d="M8 2l6 16h-3l-3-8-3 8H2z" fill="#e0e3e8"/><path d="M14 2l-2 4h3l-2 4" fill="none" stroke="#e0e3e8"/></symbol>
<symbol id="s-anno3" viewBox="0 0 20 20"><path d="M10 2l6 16h-4l-2-6-2 6H4z" fill="#e0e3e8"/></symbol>
<symbol id="s-gear" viewBox="0 0 20 20"><path d="M10 1l2 3 3-1 1 3 3 1-1 3 1 3-3 1-1 3-3-1-2 3-2-3-3 1-1-3-3-1 1-3-1-3 3-1 1-3 3 1z" fill="#e0e3e8"/><circle cx="10" cy="10" r="3" fill="#39424f"/></symbol>
<symbol id="s-plus" viewBox="0 0 20 20"><path d="M10 1v18M1 10h18" stroke="#e0e3e8" stroke-width="1.400"/></symbol>
<symbol id="s-ruler" viewBox="0 0 20 20"><path d="M5 1h9v18H5z" fill="#e0e3e8"/><path d="M10 3h4M11 6h3M10 9h4M11 12h3M10 15h4" stroke="#39424f"/></symbol>
<symbol id="s-qp" viewBox="0 0 20 20"><path d="M3 1h14v18H3z" fill="none" stroke="#e0e3e8" stroke-width="1.300"/><path d="M5 5h2M9 5h6M5 9h2M9 9h6M5 13h2M9 13h6" stroke="#e0e3e8"/></symbol>
<symbol id="s-lock" viewBox="0 0 20 20"><path d="M2 3h13v12H2z" fill="none" stroke="#e0e3e8"/><path d="M2 3h13v3H2z" fill="#e0e3e8"/><path d="M9 12h8v7H9z" fill="#e0e3e8"/><path d="M11 12V9h4v3" fill="none" stroke="#e0e3e8"/></symbol>
<symbol id="s-iso2" viewBox="0 0 20 20"><path d="M2 2h6v6H2zM14 10a3 3 0 1 0 .1 0M6 12l5 7H1z" fill="none" stroke="#e0e3e8" stroke-width="1.200"/></symbol>
<symbol id="s-hw" viewBox="0 0 20 20"><circle cx="10" cy="10" r="8.500" fill="#7fb2df" stroke="#e6eef5" stroke-width="1.400"/><path d="M6 14l8-8" stroke="#e6eef5" stroke-width="1.800"/></symbol>
<symbol id="s-unit" viewBox="0 0 20 20"><path d="M3 2h14v16H3z" fill="#2d6bb0"/><path d="M8 2v5M5 5h6" stroke="#fff"/><path d="M3 10h10v9H3z" fill="#f3b23c"/><path d="M11 13l3 4 5-8" fill="none" stroke="#4cc160" stroke-width="2"/></symbol>
<symbol id="s-full" viewBox="0 0 20 20"><path d="M2 3h16v14H2z" fill="#e0e3e8"/><path d="M4 5h12v10H4z" fill="#39424f"/><path d="M6 13l3-3M6 10v3h3M14 7l-3 3M11 7h3v3" fill="none" stroke="#e0e3e8"/></symbol>
<symbol id="s-menu" viewBox="0 0 20 20"><path d="M2 4h16v2H2zM2 9h16v2H2zM2 14h16v2H2z" fill="#e0e3e8"/></symbol>
<symbol id="restore" viewBox="0 0 20 20"><path d="M7 2h11v11h-4M3 7h11v11H3z" fill="none" stroke="#d6dae0" stroke-width="1.400"/></symbol>
</defs>
</svg>

<div class="app">
  <header class="titlebar">
    <svg class="logo"><use href="#acad"/></svg><i class="d"></i>
    <div class="ic-row first">
      <svg class="q"><use href="#new"/></svg><svg class="q"><use href="#open"/></svg><svg class="q"><use href="#save"/></svg><svg class="q"><use href="#saveas"/></svg><svg class="q"><use href="#phone1"/></svg><svg class="q"><use href="#phone2"/></svg><svg class="q"><use href="#print"/></svg><svg class="q"><use href="#undo"/></svg><i class="d"></i><svg class="q"><use href="#redog"/></svg><i class="d dim"></i><i class="d"></i>
    </div>
    <svg class="share-ic"><use href="#plane"/></svg><span class="share">共享</span>
    <span class="title"><span class="title-app">Autodesk AutoCAD 2022</span><span>某钢结构工程（球面网壳）图纸.dwg</span></span>
    <div class="title-right">
      <span class="arrow-r"></span>
      <span class="search">键入关键字或短语</span>
      <svg class="q"><use href="#mag"/></svg>
      <svg class="q"><use href="#user"/></svg>
      <span class="account">1505999135...</span><i class="d"></i>
      <svg class="q"><use href="#cart"/></svg>
      <svg class="q"><use href="#adsk"/></svg><i class="d"></i>
      <span class="vsep"></span>
      <svg class="q"><use href="#help"/></svg><i class="d"></i>
      <span class="winbtns"><span class="w-min"></span><span class="w-max"></span><span class="w-x">×</span></span>
    </div>
  </header>

  <nav class="menubar">
    <span>文件(F)</span><span>编辑(E)</span><span>视图(V)</span><span>插入(I)</span><span>格式(O)</span><span>工具(T)</span><span>绘图(D)</span><span>标注(N)</span><span>修改(M)</span><span>参数(P)</span><span>窗口(W)</span><span>帮助(H)</span><span>Express</span>
    <span class="mdi"><span class="w-min"></span><svg class="mdi-r"><use href="#restore"/></svg><span class="w-x">×</span></span>
  </nav>

  <div class="tabbar">
    <span class="tab tab-start">开始</span>
    <span class="tab tab-on">某钢结构工程（球面网壳）图纸*<span class="tab-x">×</span></span>
    <span class="tab-add">+</span>
  </div>

  <div class="toolrow row1">
    <div class="panel">
      <i class="h"></i>
      <svg class="c"><use href="#new"/></svg><svg class="c"><use href="#open"/></svg><svg class="c"><use href="#save"/></svg><i class="s"></i>
      <svg class="c"><use href="#print"/></svg><svg class="c"><use href="#preview"/></svg><svg class="c"><use href="#plot"/></svg><svg class="c"><use href="#globe"/></svg><i class="s"></i>
      <svg class="c"><use href="#cut"/></svg><svg class="c"><use href="#copy"/></svg><svg class="c"><use href="#paste"/></svg><svg class="c"><use href="#match"/></svg><svg class="c"><use href="#paint"/></svg><i class="s"></i>
      <svg class="c ml"><use href="#undo"/></svg><i class="d"></i><svg class="c"><use href="#redo"/></svg><i class="d"></i><i class="s"></i>
      <svg class="c"><use href="#hand"/></svg><svg class="c"><use href="#zrt"/></svg><svg class="c"><use href="#zwin"/></svg><svg class="c"><use href="#zprev"/></svg><i class="s"></i>
      <svg class="c"><use href="#prop"/></svg><svg class="c"><use href="#dc"/></svg><svg class="c"><use href="#tp"/></svg><svg class="c"><use href="#sheet"/></svg><svg class="c"><use href="#note"/></svg><svg class="c"><use href="#calc"/></svg><i class="s"></i>
      <svg class="c"><use href="#help"/></svg>
    </div>
    <div class="panel p-layer">
      <i class="h"></i>
      <svg class="c"><use href="#layer"/></svg>
      <div class="combo combo-layer">
        <svg class="m"><use href="#bulb"/></svg><svg class="m"><use href="#sun"/></svg><svg class="m"><use href="#vpfr"/></svg><svg class="m"><use href="#lock"/></svg><span class="swatch"></span><span>单行文本</span>
      </div>
      <svg class="c"><use href="#lamatch"/></svg><svg class="c"><use href="#laprev"/></svg><svg class="c"><use href="#stackg"/></svg>
    </div>
    <i class="h h-free"></i>
    <div class="combo combo-color"><span class="swatch"></span><span>ByLayer</span></div>
    <div class="combo combo-lt"><span class="ln ln-long"></span><span>CON...NUOU</span></div>
    <div class="combo combo-lw"><span class="ln ln-short"></span><span>ByLayer</span></div>
    <div class="combo combo-pl"><span>ByColor</span></div>
  </div>

  <div class="toolrow row2">
    <div class="panel">
      <i class="h"></i>
      <svg class="c"><use href="#mark"/></svg><svg class="c"><use href="#check"/></svg><svg class="c"><use href="#stack"/></svg>
    </div>
    <div class="panel p-dim">
      <i class="h"></i>
      <svg class="c"><use href="#dimlin"/></svg><svg class="c"><use href="#dimal"/></svg><svg class="c"><use href="#dimarc"/></svg><svg class="c"><use href="#dimord"/></svg><i class="s"></i>
      <svg class="c"><use href="#dimrad"/></svg><svg class="c"><use href="#dimjog"/></svg><svg class="c"><use href="#dimdia"/></svg><svg class="c"><use href="#dimang"/></svg><i class="s"></i>
      <svg class="c"><use href="#dimq"/></svg><svg class="c"><use href="#dimb"/></svg><svg class="c"><use href="#dimc"/></svg><svg class="c"><use href="#dims"/></svg><svg class="c"><use href="#dimbk"/></svg><i class="s"></i>
      <svg class="c"><use href="#tol"/></svg><svg class="c"><use href="#cen"/></svg><svg class="c"><use href="#insp"/></svg><svg class="c"><use href="#dimjl"/></svg><i class="s"></i>
      <svg class="c"><use href="#dimed"/></svg><svg class="c"><use href="#dimte"/></svg><svg class="c"><use href="#dimup"/></svg><i class="s"></i>
      <div class="combo combo-dim"><span>DIM100</span></div>
      <svg class="c"><use href="#dimst"/></svg><i class="s"></i>
      <svg class="c ml5"><use href="#b3a"/></svg><svg class="c"><use href="#b3b"/></svg><svg class="c"><use href="#b3c"/></svg><i class="s"></i>
      <svg class="c"><use href="#b3d"/></svg><svg class="c"><use href="#b3e"/></svg><svg class="c"><use href="#b3f"/></svg><svg class="c"><use href="#b3g"/></svg><svg class="c"><use href="#b3h"/></svg><svg class="c"><use href="#b3i"/></svg><svg class="c"><use href="#b3j"/></svg><svg class="c"><use href="#b3k"/></svg><i class="s"></i>
      <svg class="c"><use href="#b3l"/></svg><svg class="c"><use href="#b3m"/></svg><svg class="c"><use href="#b3n"/></svg><svg class="c"><use href="#b3o"/></svg><i class="s"></i>
      <svg class="c"><use href="#b3p"/></svg><svg class="c"><use href="#b3q"/></svg><svg class="c"><use href="#b3r"/></svg><svg class="c"><use href="#b3s"/></svg><svg class="c"><use href="#b3t"/></svg>
    </div>
  </div>

  <main class="work">
    <aside class="side side-left">
      <div class="vpanel vp-left">
        <i class="vh"></i>
        <svg class="v"><use href="#l1"/></svg><svg class="v"><use href="#l2"/></svg><svg class="v"><use href="#l3"/></svg><svg class="v"><use href="#l4"/></svg><svg class="v"><use href="#l5"/></svg><svg class="v"><use href="#l6"/></svg><svg class="v"><use href="#l7"/></svg><svg class="v"><use href="#l8"/></svg><svg class="v"><use href="#l9"/></svg><svg class="v"><use href="#l10"/></svg><svg class="v"><use href="#l11"/></svg><svg class="v"><use href="#l12"/></svg><svg class="v"><use href="#l13"/></svg><svg class="v"><use href="#l14"/></svg><svg class="v"><use href="#l15"/></svg><svg class="v"><use href="#l16"/></svg><svg class="v"><use href="#l17"/></svg><svg class="v"><use href="#l18"/></svg><svg class="v"><use href="#l19"/></svg><svg class="v"><use href="#l20"/></svg>
      </div>
    </aside>

    <section class="canvas">
      <svg class="drawing" viewBox="32 130 1533 1172">
        <g class="frame-thin"><rect x="371" y="417" width="1042" height="736"/><path d="M32 439H204V1175H32M1565 417H1504V1153H1565"/></g>
        <g class="frame-thick"><rect x="414" y="434" width="982" height="702"/><path d="M32 456H187V1158H32M1565 434H1548V1136H1565"/></g>

        <g class="cad">
          <path d="M780 454V503M780 848V910M771 469H790M771 472H790M771 890H790M771 893H790" />
          <path d="M780 487H853M780 870H853"/>
          <path d="M495 511V810M511 511V810M688 504H780M688 504V532M573 846H987M573 815V846M987 815V846"/>
          <path d="M450 512H496M450 806H496M470 512l3 3 3-3M470 806l3 3 3-3"/>
          <path d="M511 512H780"/>
          <g id="leaders"></g>
        </g>
        <g class="cad-text">
          <text class="t-cn" x="813" y="484" textLength="40" lengthAdjust="spacingAndGlyphs">球体中心轴</text>
          <text class="t-cn" x="813" y="867" textLength="40" lengthAdjust="spacingAndGlyphs">球体中心轴</text>
          <text class="t-sm" x="451" y="508">32.100</text>
          <text class="t-sm" x="451" y="805">15.100</text>
          <text class="t-xs" x="733" y="503">5024</text>
          <text class="t-xs" x="778" y="845">φ23614</text>
          <text class="t-xs" transform="translate(490 664) rotate(-90)">17000</text>
          <g id="dimtext"></g>
        </g>
        <g id="dome"></g>
        <g id="plan"></g>
        <g class="cad-text">
          <text class="t-title" x="777" y="942" textLength="72" lengthAdjust="spacingAndGlyphs">球壳节点定位图</text>
          <text class="t-sub" x="777" y="961" textLength="58" lengthAdjust="spacingAndGlyphs">球壳半径 R=12600</text>
        </g>
        <path class="mag" d="M737 947H816"/>
        <path class="cad" d="M737 950H816"/>

        <g class="cad">
          <path d="M1132 1077H1396V1136H1132ZM1261 1090H1396M1132 1100.500H1396M1132 1110H1261M1132 1118.500H1261M1132 1127H1261M1331 1110H1396M1331 1118.500H1396M1331 1127H1396M1261 1077V1136M1298 1077V1100.500M1164 1100.500V1136M1197 1100.500V1136M1229 1100.500V1136M1331 1100.500V1136M1363 1100.500V1136"/>
        </g>
        <g class="cad-text tb">
          <text x="1279" y="1086">工程名称</text><text x="1279" y="1098">分项工程</text><text x="1347" y="1098">钢结构工程（球面网壳）</text>
          <text x="1148" y="1108">技术负责</text><text x="1148" y="1116.500">设 计</text><text x="1148" y="1125">审 核</text><text x="1148" y="1134">审 定</text>
          <text x="1213" y="1108">校 对</text><text x="1213" y="1116.500">制 图</text><text x="1213" y="1125">描 图</text><text x="1213" y="1134">会 签</text>
          <text x="1347" y="1108">图 号</text><text x="1380" y="1108">WD-2</text><text x="1347" y="1116.500">图 别</text><text x="1380" y="1116.500">结施</text><text x="1347" y="1125">比 例</text><text x="1347" y="1134">日 期</text><text x="1380" y="1134">2007.10.21</text>
          <text class="tb-big" x="1296" y="1121">球壳节点定位图</text>
        </g>

        <g class="cad">
          <path d="M32 510H102V581H32M67 510V581M32 528H102M32 546H102M32 563H102"/>
          <path d="M32 1100H187M52 1100V1158M89 1100V1123M32 1112H187M32 1123H187M32 1131H52M32 1140H52M32 1150H52M123 1123V1158M154 1123V1158M123 1132H187M123 1141H187M123 1150H187"/>
          <path d="M59 605Q65 625 59 645M69 607Q74 625 69 643M59 605L69 607M59 645L69 643M34 620H59M34 625H59M34 630H59M70 622H82M70 628H82M40 610Q38 625 43 640L47 612"/>
          <path d="M78 726Q84 750 78 772M89 728Q90 750 89 770M78 726L89 728M78 772L89 770M40 745H78M40 750H78M90 744H100M100 742V754M104 745H118M104 752H118M60 732Q54 748 62 765L68 733M84 772V778M82 778H90"/>
          <path d="M32 887H93M32 898H61M61 898V982M93 876V966M93 916L85 920 101 924 93 926M32 944H93M32 953H93M61 922L78 983H115M32 981H61"/>
        </g>
        <path class="hatch" d="M36 898L46 887M46 898L56 887M56 898L66 887M66 898L76 887M76 898L86 887M32 953L42 944M42 953L52 944M52 953L62 944M62 953L72 944M72 953L82 944M82 953L90 944M61 612L72 605M60 620L72 612M62 628L72 620M62 636L72 628M80 738L90 728M80 746L90 736M80 754L90 744M80 762L90 752M90 748H100V756H90Z"/>
        <g class="cad-text tb">
          <text x="49" y="522">单柱容面数</text><text x="85" y="522">工艺要孔</text>
          <text class="t-left" x="34" y="494">表</text>
          <text x="68" y="1110">工程名称</text><text x="68" y="1120">分项工程</text><text x="138" y="1120">钢结构工程（球面网壳）</text>
          <text class="tb-b" x="88" y="1134">网格结构设计说明</text><text class="tb-b" x="88" y="1145">网格材料明细表</text><text class="tb-b" x="88" y="1156">支座详图</text>
          <text x="138" y="1130">图 号</text><text x="170" y="1130">WD-1</text><text x="138" y="1139">图 别</text><text x="170" y="1139">结施</text><text x="138" y="1148">比 例</text><text x="138" y="1156">日 期</text><text x="171" y="1156">2007.10.21</text>
          <text class="t-left" x="82" y="980">衬管 t=4</text><text class="t-left" x="32" y="979">20</text>
          <text transform="translate(1561 686) rotate(-90)">17000</text>
        </g>

        <g class="cube">
          <circle class="cube-ring" cx="1484" cy="209" r="51"/>
          <rect class="cube-face" x="1459" y="184" width="50" height="50"/>
          <rect class="cube-inner" x="1469" y="193" width="31" height="31"/>
          <text class="cube-top" x="1484" y="220">上</text>
          <text class="cube-dir" x="1484" y="162">北</text>
          <text class="cube-dir" x="1484" y="272">南</text>
          <text class="cube-dir" x="1429" y="217">西</text>
          <text class="cube-dir" x="1538" y="217">东</text>
          <rect class="wcs-pill" x="1461" y="294" width="46" height="17" rx="4"/>
          <text class="wcs" x="1465" y="306">WCS</text>
          <path class="wcs-arrow" d="M1494 300h8l-4 4z"/>
        </g>

        <g class="ucs">
          <path d="M60 1225V1274H109M55 1269H65V1279H55Z"/>
          <path d="M62 1206l5 8 5-8M67 1214v8M114 1259l11 14M125 1259l-11 14"/>
        </g>
      </svg>

      <div class="cmd-history">
        <span>命令: _textedit</span>
        <span>当前设置: 编辑模式 = Multiple</span>
        <span>选择注释对象或 [放弃(U)/模式(M)]: *取消*</span>
      </div>
      <div class="cmdbar">
        <div class="cmd-tools"><i class="vgrip"></i><span class="cmd-x">×</span><svg class="cmd-wrench"><use href="#wrench"/></svg></div>
        <div class="cmd-input">
          <svg class="cmd-prompt"><use href="#prompt"/></svg><i class="d d-dark"></i>
          <span class="cmd-ph">键入命令</span>
          <i class="d-up"></i>
        </div>
      </div>
    </section>

    <aside class="side side-right">
      <div class="vpanel vp-right">
        <i class="vh"></i>
        <svg class="v"><use href="#r1"/></svg><svg class="v"><use href="#r2"/></svg><svg class="v"><use href="#r3"/></svg><svg class="v"><use href="#r4"/></svg><svg class="v"><use href="#r5"/></svg><svg class="v"><use href="#r6"/></svg><svg class="v"><use href="#r7"/></svg><svg class="v"><use href="#r8"/></svg><svg class="v"><use href="#r9"/></svg><svg class="v"><use href="#r10"/></svg><svg class="v"><use href="#r11"/></svg><svg class="v"><use href="#r12"/></svg><svg class="v"><use href="#r13"/></svg><svg class="v"><use href="#r14"/></svg><svg class="v"><use href="#r15"/></svg><svg class="v"><use href="#r16"/></svg><svg class="v"><use href="#r17"/></svg><svg class="v"><use href="#r18"/></svg>
      </div>
    </aside>
  </main>

  <footer class="statusbar">
    <div class="layout-tabs">
      <span class="ltab ltab-on">模型</span><span class="ltab">布局1</span><span class="ltab ltab-add">+</span>
    </div>
    <div class="sp sp-coord">-18266.9215, 21325.9055, 0.0000</div>
    <div class="sp sp-model">模型</div>
    <div class="sp"><svg class="c2"><use href="#s-grid"/></svg><svg class="c2"><use href="#s-snap"/></svg><i class="d"></i></div>
    <div class="sp"><svg class="c2"><use href="#s-infer"/></svg><svg class="c2 on gap1"><use href="#s-dyn"/></svg><svg class="c2"><use href="#s-ortho"/></svg><svg class="c2"><use href="#s-polar"/></svg><i class="d"></i><svg class="c2"><use href="#s-iso"/></svg><i class="d"></i></div>
    <div class="sp sp-tight"><svg class="c2"><use href="#s-ang"/></svg><svg class="c2 on"><use href="#s-osnap"/></svg><i class="d"></i><i class="ss"></i><svg class="c2"><use href="#s-lw"/></svg><i class="ss"></i><svg class="c2 on"><use href="#s-trans"/></svg><svg class="c2 gap1"><use href="#s-sel"/></svg><svg class="c2 gap1"><use href="#s-cube"/></svg><i class="d"></i></div>
    <div class="sp"><svg class="c2 on"><use href="#s-ucs"/></svg><svg class="c2 gap1"><use href="#s-gizmo"/></svg><i class="d"></i><svg class="c2 on"><use href="#s-dcube"/></svg><i class="d"></i></div>
    <div class="sp"><svg class="c2 on"><use href="#s-anno"/></svg><svg class="c2"><use href="#s-anno2"/></svg><svg class="c2"><use href="#s-anno3"/></svg><span class="scale">1:1 / 100%</span><i class="d"></i></div>
    <div class="sp"><svg class="c2"><use href="#s-gear"/></svg><i class="d"></i></div>
    <div class="sp sp-tight"><svg class="c2"><use href="#s-plus"/></svg></div>
    <div class="sp sp-units"><svg class="c2"><use href="#s-ruler"/></svg><span class="units">小数</span><i class="d d-end"></i></div>
    <div class="sp"><svg class="c2"><use href="#s-qp"/></svg></div>
    <div class="sp sp-tight"><svg class="c2"><use href="#s-lock"/></svg><i class="d"></i></div>
    <div class="sp"><svg class="c2"><use href="#s-iso2"/></svg><svg class="c2 on gap2"><use href="#s-hw"/></svg></div>
    <div class="sp sp-tight"><svg class="c2"><use href="#s-unit"/></svg></div>
    <div class="sp"><svg class="c2"><use href="#s-full"/></svg><svg class="c2"><use href="#s-menu"/></svg></div>
  </footer>

  <svg class="watermark" viewBox="0 0 1600 1334">
    <text transform="translate(23 383) rotate(-45)"><tspan class="wm-cn">知末网</tspan><tspan dx="10">www.znzmo.com</tspan></text>
    <text transform="translate(574 383) rotate(-45)"><tspan class="wm-cn">知末网</tspan><tspan dx="10">www.znzmo.com</tspan></text>
    <text transform="translate(1125 383) rotate(-45)"><tspan class="wm-cn">知末网</tspan><tspan dx="10">www.znzmo.com</tspan></text>
    <text transform="translate(-130 755) rotate(-45)"><tspan class="wm-cn">知末网</tspan><tspan dx="10">www.znzmo.com</tspan></text>
    <text transform="translate(421 745) rotate(-45)"><tspan class="wm-cn">知末网</tspan><tspan dx="10">www.znzmo.com</tspan></text>
    <text transform="translate(972 745) rotate(-45)"><tspan class="wm-cn">知末网</tspan><tspan dx="10">www.znzmo.com</tspan></text>
    <text transform="translate(1523 745) rotate(-45)"><tspan class="wm-cn">知末网</tspan><tspan dx="10">www.znzmo.com</tspan></text>
    <text transform="translate(268 1112) rotate(-45)"><tspan class="wm-cn">知末网</tspan><tspan dx="10">www.znzmo.com</tspan></text>
    <text transform="translate(819 1112) rotate(-45)"><tspan class="wm-cn">知末网</tspan><tspan dx="10">www.znzmo.com</tspan></text>
    <text transform="translate(1370 1112) rotate(-45)"><tspan class="wm-cn">知末网</tspan><tspan dx="10">www.znzmo.com</tspan></text>
  </svg>
  <div class="brand"><span>知末</span></div>
  <div class="brand-id">ID: 1178386667</div>
</div>
<script src="script.js"></script>
</body>
</html>
```
FILE: styles.css
```css
* { box-sizing: border-box; }
html, body { margin: 0; height: 100%; background: #000; overflow: hidden; }
body { font-family: "Liberation Sans", "Noto Sans CJK SC", sans-serif; font-size: 12px; color: #d0d4da; }
i { font-style: normal; display: block; flex: none; }
.defs { position: absolute; width: 0; height: 0; }

.app { position: relative; height: 1334px; width: 1600px; display: flex; flex-direction: column; border-top: 2px solid #0a93d6; border-bottom: 2px solid #0a93d6; background: #2a3240; overflow: hidden; }

.d { width: 12px; height: 14px; position: relative; }
.d::after { content: ""; position: absolute; left: 3px; top: 5px; border: 3px solid transparent; border-top: 4px solid #c9cdd3; border-bottom: 0; }
.d.dim::after { border-top-color: #8b93a0; }
.d-dark::after { border-top-color: #444; }

/* title bar */
.titlebar { height: 25px; flex: none; display: flex; align-items: center; padding-left: 9px; background: #222a35; }
.logo { width: 15px; height: 16px; flex: none; }
.ic-row { display: flex; align-items: center; }
.ic-row.first { margin-left: 13px; }
.q { width: 23.200px; height: 17px; flex: none; }
.share-ic { width: 18px; height: 18px; flex: none; margin-left: 7px; }
.share { color: #85c8ef; margin-left: 3px; font-size: 12px; }
.title { margin-left: 173px; margin-bottom: 3px; font-size: 12px; color: #d4d8de; white-space: nowrap; display: flex; gap: 16px; align-items: baseline; }
.title-app { font-size: 12.500px; }
.title-right { margin-left: auto; display: flex; align-items: center; height: 100%; }
.arrow-r { width: 0; height: 0; border-left: 5px solid #c9cdd3; border-top: 4px solid transparent; border-bottom: 4px solid transparent; margin-right: 5px; }
.search { width: 174px; height: 20px; line-height: 20px; background: #414b5c; color: #8b95a5; font-style: italic; padding-left: 3px; margin-right: 1px; }
.account { color: #d6dae0; font-size: 12.500px; margin-left: 1px; white-space: nowrap; }
.vsep { width: 1px; height: 18px; background: #4a5362; margin: 0 7px 0 4px; flex: none; }
.winbtns { display: flex; align-items: center; margin-left: 67px; width: 67px; gap: 12px; }
.w-min { width: 8px; height: 2px; background: #d6dae0; margin-top: 8px; display: block; flex: none; }
.w-max { width: 12px; height: 12px; border: 1.500px solid #d6dae0; border-top-width: 2px; display: block; flex: none; }
.w-x { font-size: 20px; line-height: 16px; color: #e0e3e8; font-weight: 400; margin-left: 3px; }

/* menu */
.menubar { height: 20px; flex: none; display: flex; align-items: center; gap: 22.300px; padding: 2px 0 0 17px; background: #222a35; color: #b9bec7; border-bottom: 1px solid #363e4c; font-size: 12px; white-space: nowrap; }
.mdi { margin-left: auto; display: flex; align-items: center; gap: 6px; padding-right: 4px; }
.mdi-r { width: 14px; height: 14px; }
.mdi .w-x { font-size: 20px; margin-left: 1px; }

/* tabs */
.tabbar { height: 25px; flex: none; background: #1e2430; display: flex; align-items: flex-end; padding-left: 20px; gap: 2px; }
.tab { height: 22px; display: flex; align-items: center; font-size: 12px; }
.tab-start { width: 123px; background: #2b323e; color: #9ea4ae; padding-left: 15px; clip-path: polygon(10px 0, 116px 0, 100% 100%, 0 100%); }
.tab-on { width: 207px; background: #3b4453; color: #e8eaee; padding-left: 9px; position: relative; clip-path: polygon(4px 0, 198px 0, 100% 100%, 0 100%); white-space: nowrap; }
.tab-x { position: absolute; left: 186px; top: 1px; font-size: 17px; color: #b9bec7; }
.tab-add { margin-left: 6px; width: 22px; height: 18px; background: #2b323e; color: #b9bec7; font-size: 15px; line-height: 17px; text-align: center; clip-path: polygon(3px 0, 100% 0, 19px 100%, 0 100%); }

/* toolbars */
.toolrow { flex: none; display: flex; align-items: center; background: #3b4453; padding-left: 4px; gap: 1px; }
.row1 { height: 29px; padding-top: 3px; }
.row2 { height: 29px; padding-top: 2px; padding-bottom: 6px; }
.panel { display: flex; align-items: center; height: 22px; background: #3a4250; outline: 1px solid #2b323e; outline-offset: -1px; padding-left: 2px; flex: none; }
.row1 .panel { width: 629px; }
.row1 .panel.p-layer { width: 390px; margin-left: 1px; }
.row2 .panel:first-child { width: 76px; }
.row2 .panel.p-dim { padding-left: 1px; }
.h { width: 6px; height: 18px; background: repeating-linear-gradient(to bottom, #8a93a3 0 1px, transparent 1px 2px); border-left: 1px solid transparent; }
.h-free { margin-left: 2px; }
.s { width: 5.600px; height: 20px; position: relative; }
.s::after { content: ""; position: absolute; left: 2px; top: 0; bottom: 0; width: 1px; background: #c9cdd3; }
.c { width: 22.400px; height: 18px; flex: none; }
.ml { margin-left: 2px; }
.ml5 { margin-left: 4.500px; }

.combo { height: 22px; background: #fff; color: #1c1c1c; display: flex; align-items: center; position: relative; font-size: 12px; flex: none; border: 1px solid #bfc4ca; white-space: nowrap; }
.combo::after { content: ""; position: absolute; right: 5px; top: 6px; width: 5px; height: 5px; border-right: 1px solid #777; border-bottom: 1px solid #777; transform: rotate(45deg); }
.combo-layer { width: 292px; padding-left: 2px; }
.m { width: 18px; height: 16px; flex: none; }
.swatch { width: 12px; height: 13px; border: 1px solid #222; background: #fff; flex: none; }
.combo-layer .swatch { margin: 0 6px 0 3px; }
.combo-color { width: 145px; padding-left: 1px; }
.combo-color .swatch { margin-right: 5px; }
.combo-lt { width: 155px; margin-left: 5px; padding-left: 4px; }
.combo-lw { width: 121px; margin-left: 5px; padding-left: 4px; }
.combo-pl { width: 116px; margin-left: 5px; padding-left: 10px; color: #8a8a8a; background: #f3f3f3; }
.ln { height: 2px; background: #333; flex: none; margin-right: 5px; }
.ln-long { width: 58px; }
.ln-short { width: 34px; }
.combo-dim { width: 117px; margin-left: 2px; padding-left: 18px; }

/* workspace */
.work { flex: 1; display: flex; min-height: 0; }
.side { flex: none; background: #3b4453; }
.side-left { width: 32px; border-left: 4px solid #29323e; }
.side-right { width: 35px; padding-left: 3px; border-right: 2px solid #0a93d6; }
.vpanel { width: 23px; display: flex; flex-direction: column; align-items: center; background: #3a4250; outline: 1px solid #2b323e; outline-offset: -1px; }
.vp-left { height: 436px; }
.vp-right { height: 393px; }
.vh { width: 14px; height: 8px; flex: none; background: repeating-linear-gradient(to bottom, #8a93a3 0 1px, transparent 1px 2px); margin: 1px 0 0; }
.v { width: 18px; height: 18px; flex: none; margin-bottom: 3.350px; }
.vp-left .v:first-of-type, .vp-right .v:first-of-type { margin-top: 1px; }

.canvas { position: relative; flex: 1; background: #000; overflow: hidden; }
.drawing { position: absolute; inset: 0; width: 100%; height: 100%; }
.drawing text { font-family: "Liberation Sans", "Noto Sans CJK SC", sans-serif; }
.frame-thin * { fill: none; stroke: #d4d4d4; stroke-width: 1.300; }
.frame-thick * { fill: none; stroke: #fff; stroke-width: 2.400; }
.cad, .cad path { fill: none; stroke: #dedede; stroke-width: 1.100; }
.mag { fill: none; stroke: #e81ee8; stroke-width: 1.400; }
.hatch { fill: none; stroke: #e4e4e4; stroke-width: 1; }
.cad-text text { fill: #e8e8e8; font-size: 6px; text-anchor: middle; }
.cad-text text.t-cn { font-size: 10px; font-weight: 700; text-anchor: start; }
.cad-text text.t-sm { font-size: 8.500px; text-anchor: start; fill: #cfcfcf; }
.cad-text text.t-xs { font-size: 5.500px; }
.cad-text text.t-title { font-size: 13px; font-weight: 700; }
.cad-text text.t-sub { font-size: 8.500px; }
.cad-text text.t-ring { font-size: 7px; text-anchor: start; fill: #cfcfcf; }
.cad-text text.t-eq { font-size: 6.500px; text-anchor: start; font-weight: 700; }
.cad-text text.t-dim { font-size: 5.500px; }
.tb text { font-size: 5.500px; font-weight: 700; }
.cad-text text.t-left { text-anchor: start; font-size: 7.500px; }
.tb text.tb-big { font-size: 7.500px; }
.tb text.tb-b { font-size: 7px; font-weight: 700; }
.ln-dome { fill: none; stroke: #f00000; stroke-width: 1.300; }
.nd-dome { fill: #000; stroke: #f00000; stroke-width: 1.200; }
.ln-plan { fill: none; stroke: #e40000; stroke-width: 1; }
.nd-plan { fill: #000; stroke: #e40000; stroke-width: .8; }
.sq-dome { fill: #000; stroke: #e8e8e8; stroke-width: .9; }
.sq-plan { fill: #000; stroke: #f0b0b0; stroke-width: .8; }

.cube-ring { fill: none; stroke: #2a2a2a; stroke-width: 14; }
.cube-face { fill: #a8a8a8; stroke: #8a8a8a; }
.cube-inner { fill: #9a9a9a; }
.cube-top { font-size: 30px; fill: #5a5a5a; text-anchor: middle; }
.cube-dir { font-size: 18px; fill: #8f8f8f; text-anchor: middle; }
.wcs-pill { fill: #6c6c78; stroke: #555; }
.wcs { font-size: 11px; fill: #a4a4ac; }
.wcs-arrow { fill: #8d8d98; }
.ucs path { fill: none; stroke: #d0d0d0; stroke-width: 1; }

.cmd-history { position: absolute; left: 298px; top: 1090px; display: flex; flex-direction: column; align-items: flex-start; gap: 6px; font-family: "Liberation Mono", "Noto Sans CJK SC", monospace; font-size: 12px; color: #d0d0d0; }
.cmd-history span { background: #454545; height: 14px; line-height: 14px; padding: 0 1px; border-radius: 2px; white-space: nowrap; }
.cmdbar { position: absolute; left: 237px; top: 1146px; width: 1058px; height: 26px; display: flex; background: #1f2733; }
.cmd-tools { width: 55px; display: flex; align-items: center; flex: none; }
.vgrip { width: 6px; height: 20px; margin-left: 3px; background: repeating-linear-gradient(to bottom, #8a93a3 0 1px, transparent 1px 2px); }
.cmd-x { font-size: 19px; color: #c9cdd3; margin-left: 4px; width: 17px; }
.cmd-wrench { width: 16px; height: 16px; margin-left: 3px; }
.cmd-input { flex: 1; background: #b0b0b0; display: flex; align-items: center; padding-left: 3px; border-radius: 0 2px 2px 0; position: relative; }
.cmd-prompt { width: 16px; height: 16px; flex: none; }
.cmd-ph { font-style: italic; color: #757575; margin-left: 4px; font-size: 12.500px; }
.d-up { position: absolute; right: 4px; top: 11px; border: 4px solid transparent; border-bottom: 5px solid #4a4a4a; border-top: 0; }

/* status bar */
.statusbar { flex: none; height: 30px; display: flex; align-items: flex-start; background: #222a35; border-top: 1px solid #3a4250; }
.layout-tabs { width: 361px; flex: none; display: flex; padding-left: 18px; gap: 3px; }
.ltab { height: 16px; line-height: 16px; width: 45px; text-align: center; background: #303845; color: #b9bec7; font-size: 12px; clip-path: polygon(0 0, 100% 0, 92% 100%, 6% 100%); }
.ltab-on { color: #fff; background: #3b4453; font-weight: 700; }
.ltab-add { width: 18px; margin-left: 3px; font-size: 14px; }
.sp { height: 23px; margin-top: 1px; margin-left: 3px; background: #39424f; display: flex; align-items: center; flex: none; }
.sp-tight { margin-left: 2px; }
.sp .d { width: 16px; }
.sp .d::after { left: 5px; }
.sp-coord { width: 204px; margin-left: 0; justify-content: flex-end; padding-right: 5px; font-size: 11.600px; color: #e0e3e8; white-space: nowrap; }
.sp-model { width: 29px; justify-content: center; color: #e0e3e8; font-weight: 700; }
.c2 { width: 23px; height: 23px; flex: none; padding: 3px; }
.c2.on { background: #5e97c9; }
.c2.gap1 { margin-left: 1px; }
.c2.gap2 { margin-left: 2px; }
.ss { width: 1px; height: 23px; background: #222a35; flex: none; }
.scale { font-size: 11px; color: #e0e3e8; white-space: nowrap; margin-left: 4px; margin-right: 2px; }
.sp-units { width: 94px; }
.units { margin-left: 5px; color: #e0e3e8; }
.d-end { margin-left: auto; }

/* overlays */
.watermark { position: absolute; inset: 0; width: 1600px; height: 1334px; pointer-events: none; }
.watermark text { font-family: "Liberation Sans", "Noto Sans CJK SC", sans-serif; font-weight: 400; font-size: 37px; fill: rgba(0,0,0,.45); stroke: rgba(255,255,255,.125); stroke-width: 3; paint-order: stroke; }
.watermark .wm-cn { font-size: 30px; }
.brand { position: absolute; left: 1406px; top: 1191px; font-family: "Noto Sans CJK SC", sans-serif; font-size: 61px; line-height: 72px; letter-spacing: 1px; color: #bbb; font-weight: 500; }
.brand-id { position: absolute; left: 1359px; top: 1273px; font-family: Roboto, "Noto Sans", sans-serif; font-size: 32px; line-height: 38px; color: #fff; font-weight: 500; white-space: nowrap; }
.ic-a { font-size: 11px; fill: #e6e8ec; }
.ic-big { font-size: 23px; fill: #e6e8ec; font-family: "Liberation Sans", sans-serif; }
.ic-t { font-size: 7px; fill: #fff; }
```
FILE: script.js
```js
// Geodesic dome: rings of the sphere (node radius in mm, elevation on the section view, node count, angular offset)
var NS = 'http://www.w3.org/2000/svg';
var RINGS = [
  { r: 2678,  y: 516.7, n: 8,  off: 0,     eq: '(8等分)',  dim: '288' },
  { r: 5234,  y: 531.7, n: 16, off: 0,     eq: '(16等分)', dim: '850' },
  { r: 7560,  y: 556,   n: 32, off: 0,     eq: '(32等分)', dim: '1374' },
  { r: 9521,  y: 588,   n: 32, off: 5.625, eq: '(32等分)', dim: '1835' },
  { r: 11058, y: 627,   n: 32, off: 0,     eq: '(32等分)', dim: '2172' },
  { r: 12089, y: 670.3, n: 32, off: 5.625, eq: '(32等分)', dim: '2498' },
  { r: 12568, y: 717,   n: 32, off: 0,     eq: '(32等分)', dim: '2639' },
  { r: 12472, y: 764,   n: 32, off: 5.625, eq: '(32等分)', dim: '2802' },
  { r: 11807, y: 810,   n: 32, off: 0,     eq: '(32等分)', dim: '2800' }
];
var APEX_Y = 511.7;

function el(name, cls, attrs, parent) {
  var e = document.createElementNS(NS, name);
  if (cls) e.setAttribute('class', cls);
  for (var k in attrs) e.setAttribute(k, attrs[k]);
  parent.appendChild(e);
  return e;
}
function angDist(a, b) {
  var d = Math.abs(a - b) % 360;
  return d > 180 ? 360 - d : d;
}
function ringNodes(ring) {
  var list = [];
  for (var i = 0; i < ring.n; i++) list.push(ring.off + i * 360 / ring.n);
  return list;
}
function draw(group, project, lineCls, nodeCls, nodeR) {
  var parts = [];
  var pts = RINGS.map(function (ring) {
    return ringNodes(ring).map(function (a) { return { a: a, p: project(ring, a) }; });
  });
  var apex = project(null, 0);
  function seg(p, q) { parts.push('M' + p[0].toFixed(1) + ' ' + p[1].toFixed(1) + 'L' + q[0].toFixed(1) + ' ' + q[1].toFixed(1)); }
  pts[0].forEach(function (nd) { seg(apex, nd.p); });
  pts.forEach(function (row, i) {
    row.forEach(function (nd, j) { seg(nd.p, row[(j + 1) % row.length].p); });
    if (i < pts.length - 1) {
      var next = pts[i + 1];
      var step = 360 / next.length;
      var limit = next.length === row.length ? step * 0.51 : step * 1.01;
      row.forEach(function (nd) {
        next.forEach(function (m) { if (angDist(nd.a, m.a) <= limit) seg(nd.p, m.p); });
      });
    }
  });
  el('path', lineCls, { d: parts.join('') }, group);
  el('circle', nodeCls, { cx: apex[0], cy: apex[1], r: nodeR }, group);
  pts.forEach(function (row) {
    row.forEach(function (nd) { el('circle', nodeCls, { cx: nd.p[0], cy: nd.p[1], r: nodeR }, group); });
  });
  return pts;
}

// Section view
var K_DOME = 0.0175, CX = 780;
var dome = document.getElementById('dome');
var domePts = draw(dome, function (ring, a) {
  if (!ring) return [CX, APEX_Y];
  return [CX + ring.r * K_DOME * Math.cos(a * Math.PI / 180), ring.y];
}, 'ln-dome', 'nd-dome', 2.5);
domePts[8].forEach(function (nd) {
  el('rect', 'sq-dome', { x: nd.p[0] - 2, y: 813, width: 4, height: 5 }, dome);
});

// Plan view
var K_PLAN = 0.01406, PX = 1208, PY = 665;
var plan = document.getElementById('plan');
var planPts = draw(plan, function (ring, a) {
  if (!ring) return [PX, PY];
  var t = a * Math.PI / 180;
  return [PX + ring.r * K_PLAN * Math.cos(t), PY + ring.r * K_PLAN * Math.sin(t)];
}, 'ln-plan', 'nd-plan', 1.7);
planPts[8].forEach(function (nd) {
  el('rect', 'sq-plan', { x: nd.p[0] - 2, y: nd.p[1] - 2, width: 4, height: 4 }, plan);
});

// Leaders and ring annotations
var leaders = document.getElementById('leaders');
var labels = document.getElementById('dimtext');
var prevY = APEX_Y;
RINGS.forEach(function (ring, i) {
  var endX = CX - ring.r * K_DOME;
  el('path', '', { d: 'M511 ' + ring.y + 'H' + endX + 'M508 ' + ring.y + 'h6' }, leaders);
  var rt = el('text', 't-ring', { x: 523, y: i === 0 ? ring.y - 0.5 : ring.y - 2 }, labels);
  rt.textContent = 'R=' + ring.r;
  var et = el('text', 't-eq', { x: i === 0 ? 547 : 524, y: i === 0 ? ring.y - 0.5 : ring.y + 9 }, labels);
  et.textContent = ring.eq;
  var dt = el('text', 't-dim', { transform: 'translate(509 ' + ((prevY + ring.y) / 2) + ') rotate(-90)' }, labels);
  dt.textContent = ring.dim;
  prevY = ring.y;
});
```
